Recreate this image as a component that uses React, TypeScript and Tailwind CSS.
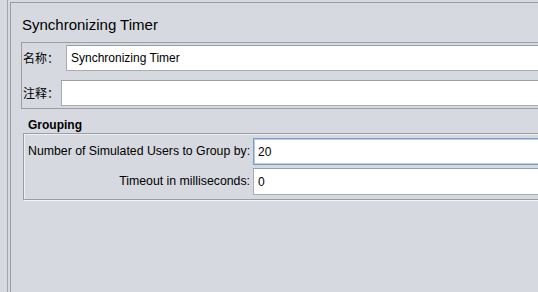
import React from 'react';

const sans = { fontFamily: '"Liberation Sans", Arial, sans-serif' };

const Field: React.FC<{ value?: string; focused?: boolean; className?: string }> = ({ value = '', focused, className = '' }) => (
    <div
        className={`flex items-center bg-white px-[4px] text-[12px] text-black border ${
            focused
                ? 'border-[#7d9cc4] shadow-[inset_0_0_0_1px_#bccde3]'
                : 'border-[#a7abb2] border-t-[#9a9ea6]'
        } ${className}`}
    >
        {value}
    </div>
);

const App: React.FC = () => {
    return (
        <div className="w-[538px] h-[292px] overflow-hidden bg-[#d6d9df] flex" style={sans}>
            <div className="w-[7px] shrink-0" />
            <div className="w-px shrink-0 bg-[#a3a6ad]" />
            <div className="w-[2px] shrink-0" />

            <div className="w-[640px] shrink-0 mt-[2px] border-l border-t border-[#9a9da4] pl-[10px] flex flex-col">
                <h1 className="mt-[12px] pl-[1px] text-[15px] leading-[20px] text-black font-normal">
                    Synchronizing Timer
                </h1>

                {/* name / comment */}
                <div className="mt-[7px] border border-[#9c9fa6] pb-[2px] flex flex-col">
                    <div className="mt-[2px] flex items-center">
                        <span
                            className="w-[44px] shrink-0 pl-[1px] text-[12px] text-black"
                            style={{ fontFamily: '"Noto Sans CJK SC", sans-serif' }}
                        >
                            名称：
                        </span>
                        <Field value="Synchronizing Timer" className="h-[26px] flex-1" />
                    </div>
                    <div className="mt-[9px] flex items-center">
                        <span
                            className="w-[39px] shrink-0 pl-[1px] text-[12px] text-black"
                            style={{ fontFamily: '"Noto Sans CJK SC", sans-serif' }}
                        >
                            注释：
                        </span>
                        <Field className="h-[26px] flex-1" />
                    </div>
                </div>

                {/* grouping */}
                <h2 className="mt-[9px] pl-[7px] text-[12px] leading-[14px] font-bold text-black">Grouping</h2>
                <div className="mt-[1px] ml-[2px] border border-[#9a9da4] shadow-[inset_1px_1px_0_#eef0f3,1px_1px_0_#f3f4f6] pl-[4px] pt-[4px] pb-[4px] grid grid-cols-[222px_1fr] gap-x-[3px] gap-y-[3px] items-center">
                    <span className="text-right text-[12.3px] text-black whitespace-nowrap">
                        Number of Simulated Users to Group by:
                    </span>
                    <Field value="20" focused className="h-[27px]" />
                    <span className="text-right text-[12.3px] text-black whitespace-nowrap">
                        Timeout in milliseconds:
                    </span>
                    <Field value="0" className="h-[27px]" />
                </div>
            </div>
        </div>
    );
};

export default App;
